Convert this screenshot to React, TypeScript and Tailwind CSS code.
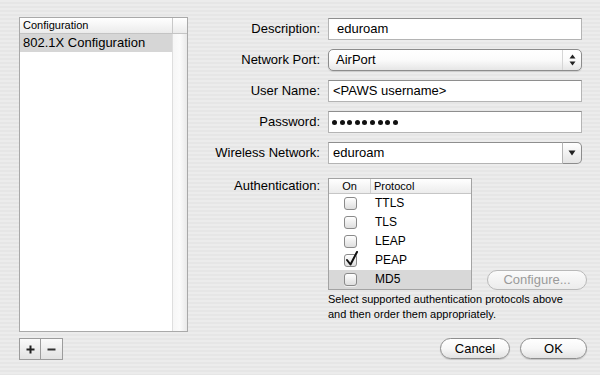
import React from "react";

function Checkbox({ checked = false }: { checked?: boolean }) {
  return (
    <div className="relative w-[13px] h-[13px] rounded-[3px] border border-[#8a8a8a] bg-gradient-to-b from-white to-[#dedede] shadow-[0_1px_0_rgba(255,255,255,0.6)]">
      {checked && (
        <svg
          className="absolute left-[0px] top-[-4px]"
          width="14"
          height="16"
          viewBox="0 0 14 16"
        >
          <path
            d="M2 9 L5.5 13.5 L12 1"
            fill="none"
            stroke="#111"
            strokeWidth="2"
            strokeLinecap="round"
            strokeLinejoin="round"
          />
        </svg>
      )}
    </div>
  );
}

function Label({ children }: { children: React.ReactNode }) {
  return (
    <div className="text-[13px] leading-[22px] text-right whitespace-nowrap">
      {children}
    </div>
  );
}

function TextField({
  value,
  pl = "pl-[4px]",
}: {
  value: string;
  pl?: string;
}) {
  return (
    <div
      className={`h-[22px] bg-white border border-[#b4b4b4] border-t-[#8e8e8e] text-[13px] leading-[20px] ${pl} whitespace-nowrap overflow-hidden`}
    >
      {value}
    </div>
  );
}

const protocols = [
  { name: "TTLS", checked: false, selected: false },
  { name: "TLS", checked: false, selected: false },
  { name: "LEAP", checked: false, selected: false },
  { name: "PEAP", checked: true, selected: false },
  { name: "MD5", checked: false, selected: true },
];

export default function App() {
  return (
    <div className="w-[600px] h-[375px] overflow-hidden flex bg-[repeating-linear-gradient(180deg,#ececec_0px,#ececec_2px,#e6e6e6_2px,#e6e6e6_4px)] font-['Liberation_Sans',Arial,sans-serif] text-black">
      {/* Left column */}
      <div className="w-[200px] shrink-0 flex flex-col pl-[19px] pt-[17px]">
        <div className="w-[169px] h-[315px] border border-[#a9a9a9] bg-white flex flex-col">
          <div className="h-[16px] flex border-b border-[#c4c4c4] bg-gradient-to-b from-white to-[#ebebeb]">
            <div className="flex-1 text-[11px] leading-[15px] pl-[3px]">
              Configuration
            </div>
            <div className="w-[15px] border-l border-[#c8c8c8]" />
          </div>
          <div className="flex flex-1">
            <div className="flex-1">
              <div className="h-[18px] bg-[#d6d6d6] text-[13px] leading-[18px] pl-[3px] whitespace-nowrap">
                802.1X Configuration
              </div>
            </div>
            <div className="w-[15px] border-l border-[#dedede] bg-gradient-to-r from-[#f6f6f6] via-[#fbfbfb] to-[#e9e9e9]" />
          </div>
        </div>
        <div className="mt-[6px] flex w-[44px] h-[22px] border border-[#9c9c9c] bg-gradient-to-b from-[#fafafa] to-[#e2e2e2]">
          <div className="w-[21px] border-r border-[#9c9c9c] flex items-center justify-center">
            <svg width="9" height="9" viewBox="0 0 9 9">
              <path d="M4.5 0.5 V8.5 M0.5 4.5 H8.5" stroke="#222" strokeWidth="2" />
            </svg>
          </div>
          <div className="flex-1 flex items-center justify-center">
            <svg width="9" height="9" viewBox="0 0 9 9">
              <path d="M0.5 4.5 H8.5" stroke="#333" strokeWidth="2" />
            </svg>
          </div>
        </div>
      </div>

      {/* Right column */}
      <div className="w-[387px] shrink-0 flex flex-col pt-[18px]">
        <div className="grid grid-cols-[120px_254px] gap-x-[8px] gap-y-[9px]">
          <Label>Description:</Label>
          <TextField value="eduroam" pl="pl-[8px]" />

          <Label>Network Port:</Label>
          <div className="h-[22px] flex rounded-[5px] border border-[#8c8c8c] bg-gradient-to-b from-white via-[#fbfbfb] to-[#e6e6e6] shadow-[0_1px_1px_rgba(0,0,0,0.12)]">
            <div className="flex-1 text-[13px] leading-[20px] pl-[7px]">AirPort</div>
            <div className="w-[19px] border-l border-[#d6d6d6] flex items-center justify-center">
              <svg width="7" height="12" viewBox="0 0 7 12">
                <path d="M3.5 0.5 L6.5 4.5 H0.5 Z" fill="#222" />
                <path d="M3.5 11.5 L6.5 7.5 H0.5 Z" fill="#222" />
              </svg>
            </div>
          </div>

          <Label>User Name:</Label>
          <TextField value="<PAWS username>" />

          <Label>Password:</Label>
          <div className="h-[22px] bg-white border border-[#b4b4b4] border-t-[#8e8e8e] flex items-center pl-[3px] gap-[2.6px]">
            {Array.from({ length: 9 }).map((_, i) => (
              <div key={i} className="w-[5px] h-[5px] rounded-full bg-[#111]" />
            ))}
          </div>

          <Label>Wireless Network:</Label>
          <div className="h-[22px] flex">
            <div className="flex-1 bg-white border border-[#b4b4b4] border-t-[#8e8e8e] text-[13px] leading-[20px] pl-[4px]">
              eduroam
            </div>
            <div className="w-[19px] rounded-r-[5px] border border-l-0 border-[#8c8c8c] bg-gradient-to-b from-white to-[#e4e4e4] flex items-center justify-center">
              <svg width="8" height="6" viewBox="0 0 8 6">
                <path d="M0.5 0.5 H7.5 L4 5.5 Z" fill="#222" />
              </svg>
            </div>
          </div>
        </div>

        {/* Authentication */}
        <div className="mt-[14px] flex">
          <div className="w-[120px] text-[13px] leading-[15px] text-right">
            Authentication:
          </div>
          <div className="ml-[8px] w-[259px] flex items-end">
            <div className="w-[144px] border border-[#a3a3a3] bg-white">
              <div className="h-[15px] flex border-b border-[#c6c6c6] bg-gradient-to-b from-white to-[#ececec] text-[11px] leading-[14px]">
                <div className="w-[42px] text-center border-r border-[#cfcfcf]">On</div>
                <div className="pl-[3px]">Protocol</div>
              </div>
              {protocols.map((p) => (
                <div
                  key={p.name}
                  className={`h-[19px] flex items-center ${p.selected ? "bg-[#d8d8d8]" : ""}`}
                >
                  <div className="w-[42px] flex justify-center">
                    <Checkbox checked={p.checked} />
                  </div>
                  <div className="pl-[4px] text-[12px] leading-[19px]">{p.name}</div>
                </div>
              ))}
            </div>
            <div className="flex-1" />
            <div className="w-[100px] h-[20px] rounded-full border border-[#b9b9b9] bg-gradient-to-b from-[#fbfbfb] to-[#ececec] text-[13px] leading-[18px] text-center text-[#9a9a9a]">
              Configure...
            </div>
          </div>
        </div>

        <div className="mt-[2px] ml-[128px] text-[11px] leading-[15px] whitespace-nowrap">
          <div>Select supported authentication protocols above</div>
          <div>and then order them appropriately.</div>
        </div>

        <div className="mt-[16px] flex justify-end gap-[10px]">
          <div className="w-[70px] h-[21px] rounded-full border border-[#8e8e8e] bg-gradient-to-b from-white via-[#f7f7f7] to-[#e2e2e2] text-[13px] leading-[19px] text-center shadow-[0_1px_1px_rgba(0,0,0,0.15)]">
            Cancel
          </div>
          <div className="w-[67px] h-[21px] rounded-full border border-[#8e8e8e] bg-gradient-to-b from-white via-[#f7f7f7] to-[#e2e2e2] text-[13px] leading-[19px] text-center shadow-[0_1px_1px_rgba(0,0,0,0.15)]">
            OK
          </div>
        </div>
      </div>
    </div>
  );
}
